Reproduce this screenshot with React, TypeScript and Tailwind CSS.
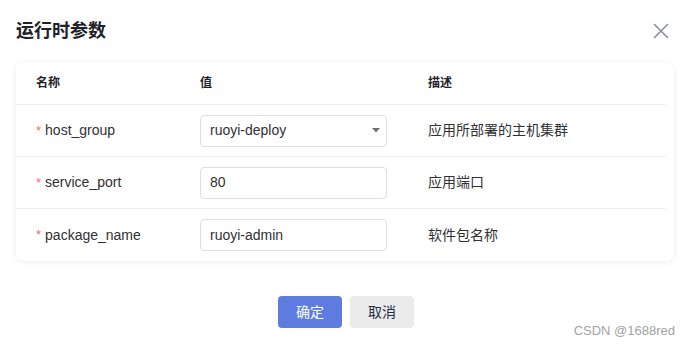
const params = [
  { name: "host_group", value: "ruoyi-deploy", desc: "应用所部署的主机集群", select: true },
  { name: "service_port", value: "80", desc: "应用端口", select: false },
  { name: "package_name", value: "ruoyi-admin", desc: "软件包名称", select: false },
];

const font = { fontFamily: '"Liberation Sans", Arial, "Noto Sans CJK SC", sans-serif' };

export default function App() {
  return (
    <div className="relative w-[690px] h-[346px] bg-white text-[#303133]" style={font}>
      {/* Header */}
      <div className="flex items-center justify-between pl-4 pr-[22px] h-[62px]">
        <h1 className="text-[18px] font-bold text-[#1f2329] leading-6">运行时参数</h1>
        <svg width="16" height="16" viewBox="0 0 16 16" className="mr-[-1px]">
          <path d="M1.5 1.5 L14.5 14.5 M14.5 1.5 L1.5 14.5" stroke="#8a8f99" strokeWidth="1.6" strokeLinecap="round" />
        </svg>
      </div>

      {/* Params table card */}
      <div className="mx-4 rounded-lg bg-white shadow-[0_1px_6px_rgba(0,0,0,0.08)] pr-2">
        <div className="flex items-center h-[43px] border-b border-[#ebeef5] text-[12px] font-bold text-[#1f2329]">
          <div className="w-[184px] pl-5">名称</div>
          <div className="w-[228px]">值</div>
          <div>描述</div>
        </div>
        {params.map((p, i) => (
          <div
            key={p.name}
            className={`flex items-center h-[52px] text-[14px] ${i < params.length - 1 ? "border-b border-[#ebeef5]" : ""}`}
          >
            <div className="w-[184px] pl-5 flex items-center">
              <span className="text-[#f56c6c] mr-[4px] text-[13px]">*</span>
              <span className="text-[#303133]">{p.name}</span>
            </div>
            <div className="w-[228px]">
              <div className="w-[187px] h-8 border border-[#dcdfe6] rounded flex items-center justify-between pl-[9px] pr-[6px] text-[#303133]">
                <span>{p.value}</span>
                {p.select && (
                  <svg width="8" height="5" viewBox="0 0 8 5">
                    <path d="M0 0 L8 0 L4 4.5 Z" fill="#6b6f76" />
                  </svg>
                )}
              </div>
            </div>
            <div className="text-[#303133]">{p.desc}</div>
          </div>
        ))}
      </div>

      {/* Footer */}
      <div className="flex justify-center gap-2 mt-[35px] pl-[2px]">
        <button className="w-16 h-8 rounded bg-[#5e7ce0] text-white text-[14px]">确定</button>
        <button className="w-16 h-8 rounded bg-[#ebebeb] text-[#252b3a] text-[14px]">取消</button>
      </div>

      <div className="absolute right-[15px] bottom-[7px] text-[13px] text-[#a3a3a3] leading-4">CSDN @1688red</div>
    </div>
  );
}
